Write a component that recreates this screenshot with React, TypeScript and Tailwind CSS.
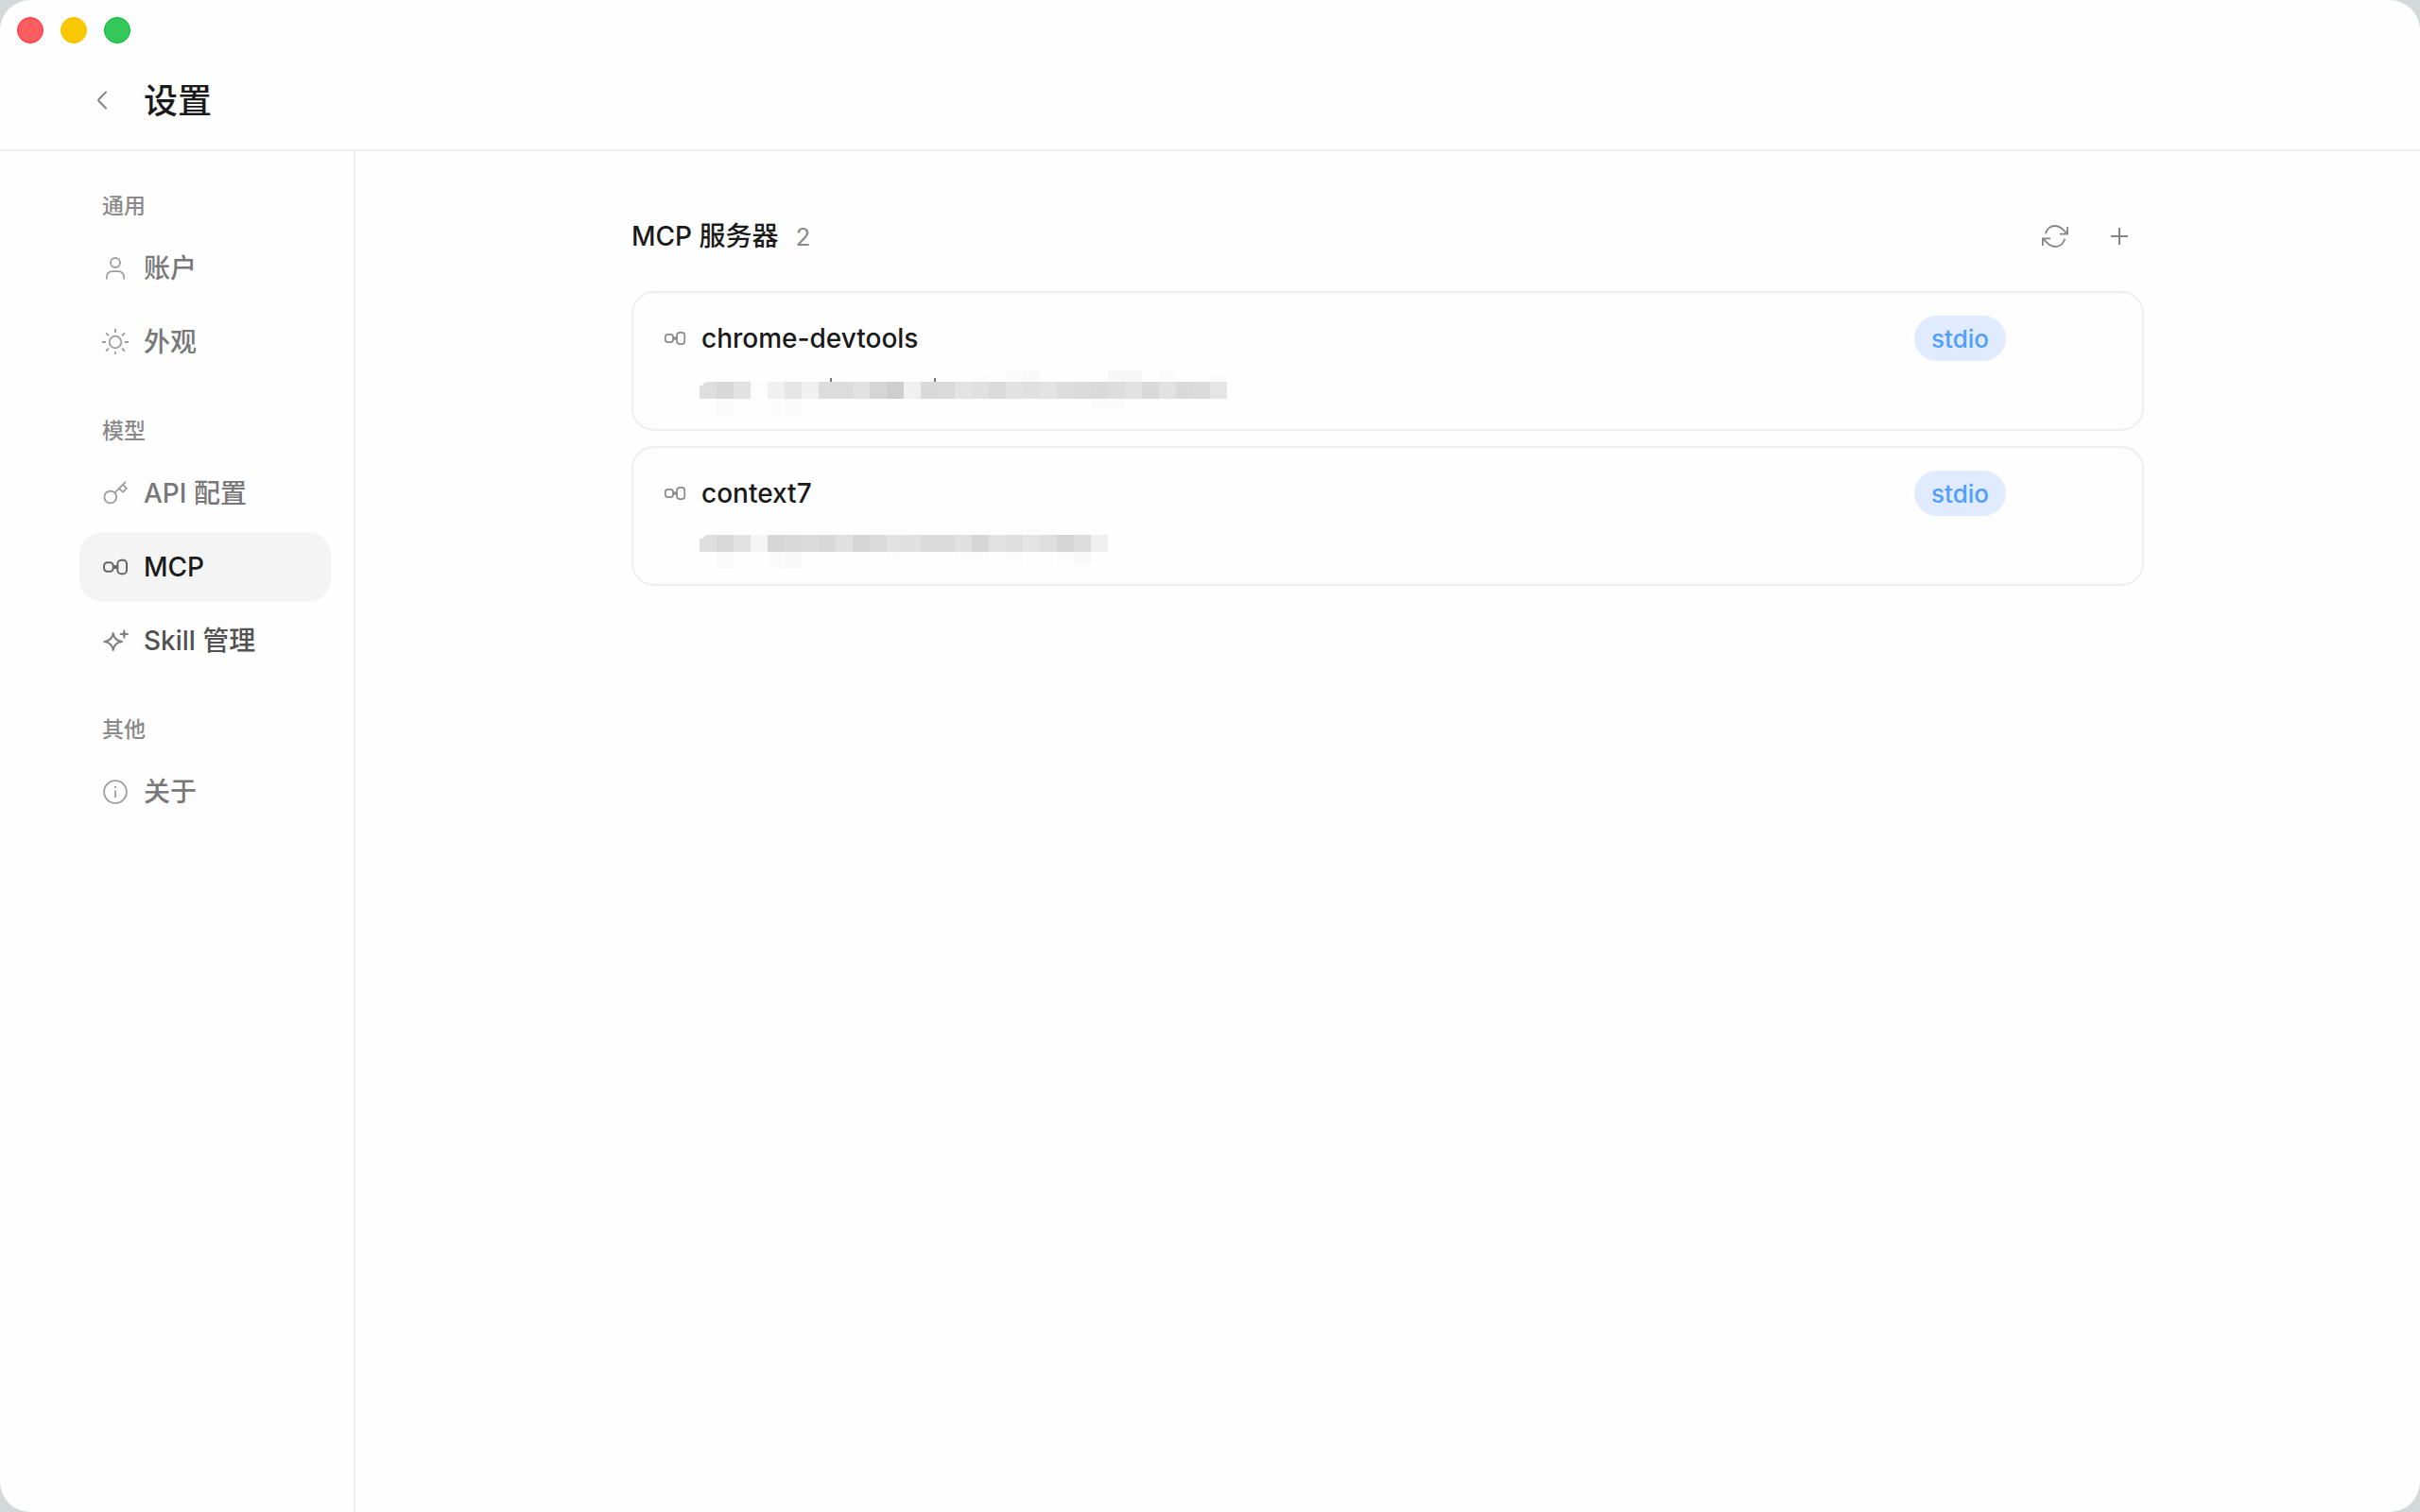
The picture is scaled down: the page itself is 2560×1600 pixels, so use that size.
import React, { useState } from 'react';

type IconProps = { className?: string };

const iconBase = {
  viewBox: '0 0 28 28',
  fill: 'none',
  stroke: 'currentColor',
  strokeWidth: 1.8,
  'aria-hidden': true,
} as const;

const UserIcon = ({ className }: IconProps) => (
  <svg {...iconBase} className={className}>
    <circle cx="14" cy="8" r="5" />
    <path d="M4.8 25.6v-2.4a6 6 0 0 1 6-6h6.4a6 6 0 0 1 6 6v2.4" />
  </svg>
);

const SunIcon = ({ className }: IconProps) => (
  <svg {...iconBase} className={className}>
    <circle cx="14" cy="14" r="6.3" />
    <path d="M14 0v4M14 24v3M0 14h4M24 14h4M4 4.4l3 3M21 7.4l3-3M4 23.6l3-3M21 20.6l3 3" />
  </svg>
);

const KeyIcon = ({ className }: IconProps) => (
  <svg {...iconBase} className={className}>
    <circle cx="8.8" cy="18" r="6.4" />
    <path d="M13.4 13.4L25 1.8M18 9l4 3.6 3.8-3.8-3.6-3.8" />
  </svg>
);

const McpIcon = ({ className }: IconProps) => (
  <svg {...iconBase} strokeWidth={2} className={className}>
    <rect x="2.1" y="9.2" width="9.6" height="9.6" rx="3.4" />
    <rect x="16.4" y="6.8" width="9.6" height="14.4" rx="3.8" />
    <path d="M11.6 14h5" strokeWidth="3.8" />
  </svg>
);

const SparkleIcon = ({ className }: IconProps) => (
  <svg {...iconBase} strokeWidth={2} className={className}>
    <path
      d="M11.7 6c.7 5 3.3 8.3 9.3 9-6 .7-8.6 4-9.3 9-.7-5-3.3-8.3-9.3-9 6-.7 8.6-4 9.3-9z"
      strokeLinejoin="round"
    />
    <path d="M23.3 2.6v8.8M18.9 7h8.8" />
    <circle cx="23.3" cy="7" r="2" fill="currentColor" stroke="none" />
  </svg>
);

const InfoIcon = ({ className }: IconProps) => (
  <svg {...iconBase} className={className}>
    <circle cx="14" cy="14" r="11.9" />
    <path d="M14 12.5v7.5M14 8v2" />
  </svg>
);

const RefreshIcon = ({ className }: IconProps) => (
  <svg {...iconBase} className={className}>
    <path d="M3.8 11.2C5.2 6.3 9.2 3 13.8 3c5.2 0 8.4 3.6 12.8 8.4M27.1 4v7.7h-8.2" />
    <path d="M24.2 16.8C22.8 21.7 18.8 25 14.2 25c-5.2 0-8.4-3.6-12.8-8.4M.9 24v-7.7h8.2" />
  </svg>
);

const PlusIcon = ({ className }: IconProps) => (
  <svg {...iconBase} strokeWidth={2} className={className}>
    <path d="M14 5v18M5 14h18" />
  </svg>
);

const BackIcon = ({ className }: IconProps) => (
  <svg {...iconBase} strokeWidth={2} strokeLinecap="round" className={className}>
    <path d="M18 4.5L10.6 12q-.9 1 0 2L18 21.5" />
  </svg>
);

const sections = [
  {
    title: '通用',
    items: [
      { id: 'account', label: '账户', icon: UserIcon },
      { id: 'appearance', label: '外观', icon: SunIcon },
    ],
  },
  {
    title: '模型',
    items: [
      { id: 'api', label: 'API 配置', icon: KeyIcon },
      { id: 'mcp', label: 'MCP', icon: McpIcon },
      { id: 'skill', label: 'Skill 管理', icon: SparkleIcon },
    ],
  },
  {
    title: '其他',
    items: [{ id: 'about', label: '关于', icon: InfoIcon }],
  },
];

// [列, y, 高, 颜色]
type Shade = [number, number, number, string];

type Server = {
  name: string;
  transport: string;
  blocks: string[];
  shades: Shade[];
  ticks: number[];
};

const servers: Server[] = [
  {
    name: 'chrome-devtools',
    transport: 'stdio',
    blocks: [
      'dedede', 'd8d8d8', 'e2e2e2', 'fdfdfd', 'f0f0f0', 'e5e5e5', 'f0f0f0', 'dcdcdc',
      'dcdcdc', 'e1e1e1', 'd5d5d5', 'cecece', 'f0f0f0', 'd9d9d9', 'dadada', 'e3e3e3',
      'e0e0e0', 'dadada', 'e2e2e2', 'e0e0e0', 'e3e3e3', 'dddddd', 'dbdbdb', 'd9d9d9',
      'dddddd', 'e1e1e1', 'd9d9d9', 'e2e2e2', 'd9d9d9', 'dbdbdb', 'e5e5e5',
    ],
    shades: [
      [16, 8, 6, 'fcfcfc'], [18, 2, 12, 'fbfbfb'], [19, 2, 12, 'f9f9f9'],
      [24, 2, 12, 'f7f7f7'], [25, 2, 12, 'f7f7f7'], [27, 2, 12, 'fbfbfb'], [30, 6, 8, 'fbfbfb'],
      [1, 32, 18, 'fbfbfb'], [4, 32, 18, 'fcfcfc'], [5, 32, 18, 'fafafa'],
      [23, 32, 10, 'fbfbfb'], [24, 32, 10, 'fbfbfb'],
    ],
    ticks: [138, 248],
  },
  {
    name: 'context7',
    transport: 'stdio',
    blocks: [
      'dedede', 'd9d9d9', 'e2e2e2', 'f5f5f5', 'd6d6d6', 'd9d9d9', 'dbdbdb', 'd8d8d8',
      'e0e0e0', 'd6d6d6', 'dbdbdb', 'e2e2e2', 'e0e0e0', 'dbdbdb', 'dbdbdb', 'e0e0e0',
      'd6d6d6', 'e1e1e1', 'dedede', 'e4e4e4', 'dedede', 'd5d5d5', 'dddddd', 'f0f0f0',
    ],
    shades: [
      [4, 8, 4, 'fcfcfc'], [10, 6, 6, 'fcfcfc'], [11, 6, 6, 'fcfcfc'],
      [18, 6, 6, 'fcfcfc'], [19, 6, 6, 'fcfcfc'],
      [1, 30, 18, 'fafafa'], [4, 30, 18, 'fbfbfb'], [5, 30, 18, 'f9f9f9'],
      [11, 30, 14, 'fcfcfc'], [15, 30, 14, 'fcfcfc'], [16, 30, 14, 'fcfcfc'],
      [18, 30, 14, 'fcfcfc'], [21, 30, 14, 'fcfcfc'], [22, 30, 14, 'f9f9f9'],
    ],
    ticks: [],
  },
];

// 打码后的启动命令
const MaskedCommand = ({ server, top }: { server: Server; top: number }) => (
  <svg
    width={server.blocks.length * 18}
    height={50}
    shapeRendering="crispEdges"
    role="img"
    aria-label="command"
  >
    {server.shades.map(([col, y, h, color]) => (
      <rect key={`${col}-${y}`} x={col * 18} y={y} width={18} height={h} fill={`#${color}`} />
    ))}
    {server.blocks.map((color, i) => (
      <rect key={i} x={i * 18} y={top} width={18} height={18} fill={`#${color}`} />
    ))}
    <path d={`M0 ${top}h8l-4 2-2 2-2 0z`} fill="#fefefe" />
    {server.ticks.map((x) => (
      <rect key={x} x={x} y={10} width={2} height={4} fill="#777777" />
    ))}
  </svg>
);

const App: React.FC = () => {
  const [active, setActive] = useState('mcp');

  return (
    <div className="bg-[#d3d8d8]">
      <div className="min-h-screen flex flex-col bg-[#fefefe] rounded-[32px] overflow-hidden font-['Inter','Noto_Sans_CJK_SC',sans-serif] text-[#1a1a1a]">
        {/* 顶部栏 */}
        <header className="pt-[18px] pb-[26px] border-b-2 border-[#efefef] shrink-0">
          <div className="flex gap-[18px] pl-[18px]">
            <button aria-label="关闭" className="size-7 rounded-full bg-[#ff5c60] border border-[#fb2c3c]" />
            <button aria-label="最小化" className="size-7 rounded-full bg-[#fac800] border border-[#f5c000]" />
            <button aria-label="最大化" className="size-7 rounded-full bg-[#34c759] border border-[#00b92c]" />
          </div>
          <div className="mt-9 h-[50px] pl-[84px] flex items-center gap-5">
            <button aria-label="返回" className="size-12 flex items-center justify-center text-[#858585]">
              <BackIcon className="size-7" />
            </button>
            <h1 className="text-4xl font-medium">设置</h1>
          </div>
        </header>

        <div className="flex flex-1">
          {/* 侧边导航 */}
          <aside className="w-[376px] shrink-0 border-r-2 border-[#efefef] pl-[84px] pr-6 pt-[41px]">
            <nav className="flex flex-col gap-10">
              {sections.map((section) => (
                <section key={section.title}>
                  <h2 className="px-6 mb-3 text-[23px] leading-[34px] font-medium text-[#8a8a8a]">
                    {section.title}
                  </h2>
                  <div className="flex flex-col gap-1">
                    {section.items.map(({ id, label, icon: Icon }) => (
                      <button
                        key={id}
                        onClick={() => setActive(id)}
                        className={`h-[74px] px-6 flex items-center gap-4 rounded-3xl text-[28px] font-medium ${
                          id === active ? 'bg-[#f4f4f4] text-[#1a1a1a]' :
                          id === 'skill' ? 'text-[#525252]' : 'text-[#787878]'
                        }`}
                      >
                        <Icon
                          className={`size-7 shrink-0 ${
                            id === active ? 'text-[#666666]' :
                            id === 'skill' ? 'text-[#808080]' : 'text-[#9c9c9c]'
                          }`}
                        />
                        {label}
                      </button>
                    ))}
                  </div>
                </section>
              ))}
            </nav>
          </aside>

          {/* 服务器列表 */}
          <main className="flex-1 pt-16 px-12">
            <div className="max-w-[1600px] mx-auto">
              <div className="flex items-center justify-between mb-8">
                <div className="flex items-baseline gap-[18px]">
                  <h2 className="text-[28px] font-medium">MCP 服务器</h2>
                  <span className="text-[26px] text-[#8a8a8a]">{servers.length}</span>
                </div>
                <div className="flex gap-4 text-[#858585]">
                  <button aria-label="刷新" className="size-[52px] flex items-center justify-center">
                    <RefreshIcon className="size-7" />
                  </button>
                  <button aria-label="添加" className="size-[52px] flex items-center justify-center">
                    <PlusIcon className="size-7" />
                  </button>
                </div>
              </div>

              <ul className="flex flex-col gap-4">
                {servers.map((server, i) => (
                  <li key={server.name} className="border-2 border-[#efefef] rounded-3xl px-8 pt-6 pb-[14px]">
                    <div className="flex items-center gap-4">
                      <McpIcon className="size-6 shrink-0 text-[#8a8a8a]" />
                      <span className="text-[28px] font-medium">{server.name}</span>
                      <span className="ml-auto mr-28 h-12 px-[18px] flex items-center rounded-full bg-[#e0ebff] text-[26px] font-medium text-[#509fff]">
                        {server.transport}
                      </span>
                    </div>
                    <div className="pl-[38px] pt-2">
                      <MaskedCommand server={server} top={i === 0 ? 14 : 12} />
                    </div>
                  </li>
                ))}
              </ul>
            </div>
          </main>
        </div>
      </div>
    </div>
  );
};

export default App;
